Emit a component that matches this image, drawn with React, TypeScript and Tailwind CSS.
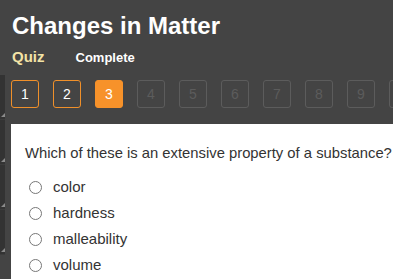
import React from "react";

export default function App() {
  const nums = [1, 2, 3, 4, 5, 6, 7, 8, 9, 10];
  const opts = ["color", "hardness", "malleability", "volume"];
  return (
    <div className="w-[393px] h-[279px] overflow-hidden bg-[#444444] relative" style={{ fontFamily: '"Liberation Sans", Arial, sans-serif' }}>
      <div className="pl-[12px] pt-[11px]">
        <div className="text-[24px] leading-[30px] font-bold text-white">Changes in Matter</div>
        <div className="flex items-baseline mt-[5px] h-[24px]">
          <span className="text-[15px] font-bold text-[#f3e3a6]">Quiz</span>
          <span className="text-[13px] font-bold text-white ml-[31px]">Complete</span>
        </div>
      </div>
      <div className="flex">
        <div className="w-[5px] shrink-0 mt-[5px] flex flex-col">
          {[0, 1, 2, 3].map((i) => (
            <div key={i} className="h-[45px] bg-[#333333] border-b border-[#3c3c3c] relative">
              <div className="absolute right-0 bottom-[2px] w-0 h-0 border-l-[4px] border-l-transparent border-b-[4px] border-b-[#8a8a8a]" />
            </div>
          ))}
        </div>
        <div className="flex-1 pl-[6px]">
          <div className="flex gap-[14px] pt-[10px] h-[54px] whitespace-nowrap">
            {nums.map((n) => {
              const cls =
                n < 3
                  ? "border border-[#f0902a] text-white"
                  : n === 3
                  ? "bg-[#f7922a] border border-[#f7922a] text-white"
                  : "border border-[#5c5c5c] text-[#5c5c5c]";
              return (
                <div key={n} className={`w-[28px] h-[28px] shrink-0 rounded-[3px] flex items-center justify-center text-[14px] ${cls}`}>
                  {n}
                </div>
              );
            })}
          </div>
          <div className="bg-white h-[200px] pl-[14px] pt-[19px]">
            <div className="text-[14.8px] text-[#333333] whitespace-nowrap leading-[20px]">Which of these is an extensive property of a substance?</div>
            <div className="mt-[11px] flex flex-col">
              {opts.map((o) => (
                <div key={o} className="flex items-center h-[26px]">
                  <span className="w-[13px] h-[13px] rounded-full border border-[#777777] ml-[4px] bg-white" />
                  <span className="ml-[11px] text-[15px] text-[#333333]">{o}</span>
                </div>
              ))}
            </div>
          </div>
        </div>
      </div>
    </div>
  );
}
